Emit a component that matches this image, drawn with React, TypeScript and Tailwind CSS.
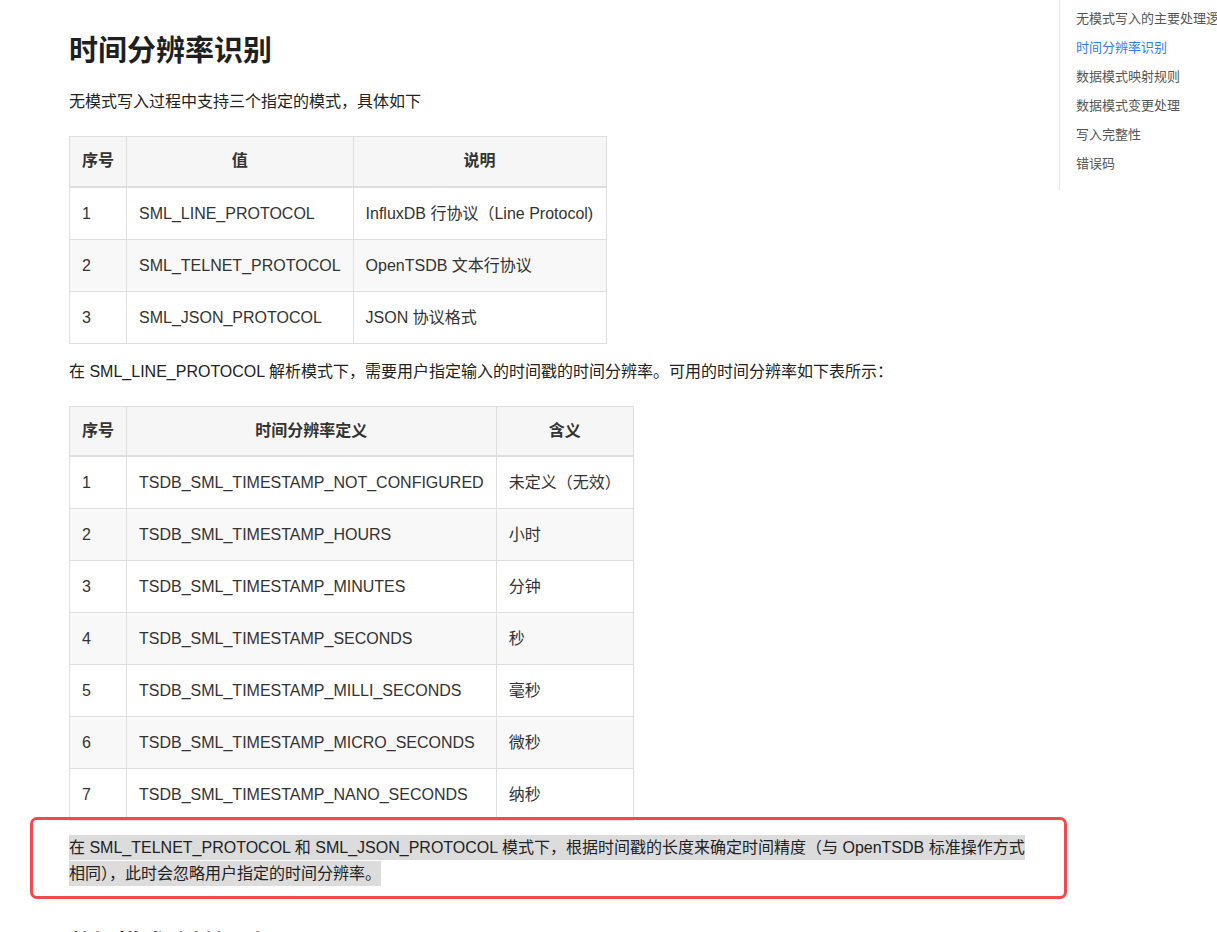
import React from 'react';

const protocols = [
  ['1', 'SML_LINE_PROTOCOL', 'InfluxDB 行协议（Line Protocol)'],
  ['2', 'SML_TELNET_PROTOCOL', 'OpenTSDB 文本行协议'],
  ['3', 'SML_JSON_PROTOCOL', 'JSON 协议格式'],
];

const precisions = [
  ['1', 'TSDB_SML_TIMESTAMP_NOT_CONFIGURED', '未定义（无效）'],
  ['2', 'TSDB_SML_TIMESTAMP_HOURS', '小时'],
  ['3', 'TSDB_SML_TIMESTAMP_MINUTES', '分钟'],
  ['4', 'TSDB_SML_TIMESTAMP_SECONDS', '秒'],
  ['5', 'TSDB_SML_TIMESTAMP_MILLI_SECONDS', '毫秒'],
  ['6', 'TSDB_SML_TIMESTAMP_MICRO_SECONDS', '微秒'],
  ['7', 'TSDB_SML_TIMESTAMP_NANO_SECONDS', '纳秒'],
];

const toc = [
  { label: '无模式写入的主要处理逻辑', active: false },
  { label: '时间分辨率识别', active: true },
  { label: '数据模式映射规则', active: false },
  { label: '数据模式变更处理', active: false },
  { label: '写入完整性', active: false },
  { label: '错误码', active: false },
];

const font = { fontFamily: '"Liberation Sans", "Noto Sans CJK SC", sans-serif' };

const DocTable = ({
  head,
  rows,
  widths,
}: {
  head: string[];
  rows: string[][];
  widths: string[];
}) => (
  <table className="mt-[21px] table-fixed border-collapse text-[16px] text-[#333]">
    <thead>
      <tr className="bg-[#f6f6f6]">
        {head.map((h, i) => (
          <th
            key={h}
            className={`${widths[i]} h-[50px] border border-b-2 border-[#dfdfdf] px-3 text-center font-bold`}
          >
            {h}
          </th>
        ))}
      </tr>
    </thead>
    <tbody>
      {rows.map((r, ri) => (
        <tr key={r[0]} className={ri % 2 === 1 ? 'bg-[#f8f8f8]' : 'bg-white'}>
          {r.map((c, ci) => (
            <td key={ci} className="border border-[#dfdfdf] px-3 py-3 text-left leading-[27px] whitespace-nowrap">
              {c}
            </td>
          ))}
        </tr>
      ))}
    </tbody>
  </table>
);

export default function App() {
  return (
    <div className="relative flex h-[932px] w-[1217px] overflow-hidden bg-white" style={font}>
      <main className="w-[1059px] shrink-0 pl-[69px] pt-[33px]">
        <div className="w-[964px] text-[#222]">
          <h1 className="text-[29px] leading-[36px] font-bold text-[#1f1f1f]">时间分辨率识别</h1>
          <p className="mt-[20px] text-[16px] leading-[26px]">无模式写入过程中支持三个指定的模式，具体如下</p>
          <DocTable head={['序号', '值', '说明']} rows={protocols} widths={['w-[57px]', 'w-[226px]', 'w-[253px]']} />
          <p className="mt-[15px] text-[16px] leading-[26px]">
            在 SML_LINE_PROTOCOL 解析模式下，需要用户指定输入的时间戳的时间分辨率。可用的时间分辨率如下表所示：
          </p>
          <DocTable
            head={['序号', '时间分辨率定义', '含义']}
            rows={precisions}
            widths={['w-[57px]', 'w-[369px]', 'w-[137px]']}
          />
          <p className="mt-[14px] text-[16px] leading-[26px]">
            <span className="bg-[#dcdcdc] py-[4px] box-decoration-clone">
              在 SML_TELNET_PROTOCOL 和 SML_JSON_PROTOCOL 模式下，根据时间戳的长度来确定时间精度（与 OpenTSDB 标准操作方式相同），此时会忽略用户指定的时间分辨率。
            </span>
          </p>
          <h2 className="mt-[39px] text-[24px] leading-[36px] font-bold text-[#1f1f1f]">数据模式映射规则</h2>
        </div>
      </main>

      <aside className="w-[200px] shrink-0 self-start border-l border-[#e6e6e6] pt-[4px] pb-[12px] pl-4">
        <ul>
          {toc.map((t) => (
            <li
              key={t.label}
              className={`whitespace-nowrap text-[13px] leading-[29px] ${t.active ? 'text-[#2f7cf6]' : 'text-[#555]'}`}
            >
              {t.label}
            </li>
          ))}
        </ul>
      </aside>

      {/* annotation box */}
      <div className="pointer-events-none absolute top-[817px] left-[30px] h-[82px] w-[1037px] rounded-[7px] border-[3px] border-[#f04b4b]" />
    </div>
  );
}
